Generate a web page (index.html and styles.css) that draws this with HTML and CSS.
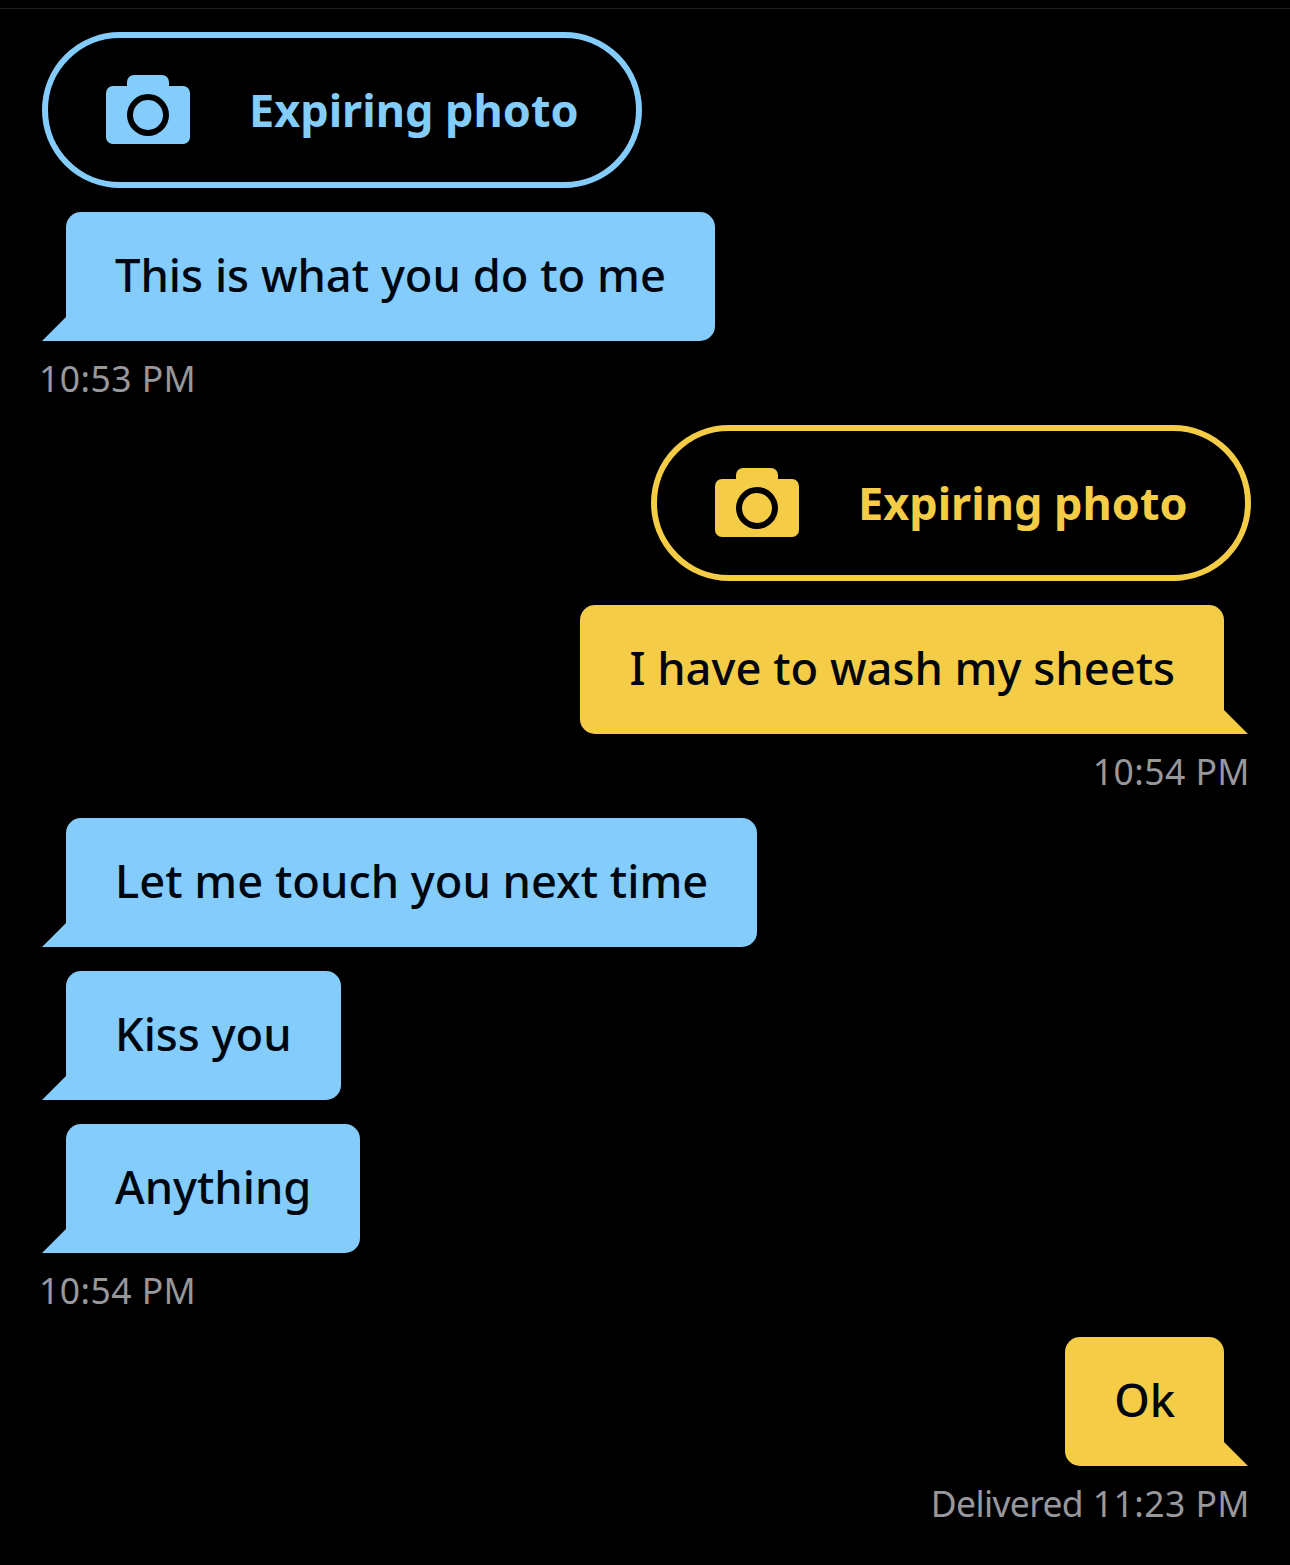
FILE: index.html
```html
<!DOCTYPE html>
<html lang="en">
<head>
  <meta charset="UTF-8">
  <meta name="viewport" content="width=device-width, initial-scale=1.0">
  <title>Chat</title>
  <link rel="stylesheet" href="styles.css">
</head>
<body>
  <div id="chat">
    <div class="group theirs first">
      <div class="photo">
        <svg class="camera" viewBox="0 0 84 69"><path fill-rule="evenodd" d="M21 11V7a7 7 0 0 1 7-7h28a7 7 0 0 1 7 7v4h14a7 7 0 0 1 7 7v44a7 7 0 0 1-7 7H7a7 7 0 0 1-7-7V18a7 7 0 0 1 7-7zM42 19a21 21 0 1 0 0 42a21 21 0 1 0 0-42zM42 25a15 15 0 1 1 0 30a15 15 0 1 1 0-30z"/></svg>
        <span>Expiring photo</span>
      </div>
      <div class="bubble">This is what you do to me</div>
      <div class="time">10:53 PM</div>
    </div>

    <div class="group mine">
      <div class="photo">
        <svg class="camera" viewBox="0 0 84 69"><path fill-rule="evenodd" d="M21 11V7a7 7 0 0 1 7-7h28a7 7 0 0 1 7 7v4h14a7 7 0 0 1 7 7v44a7 7 0 0 1-7 7H7a7 7 0 0 1-7-7V18a7 7 0 0 1 7-7zM42 19a21 21 0 1 0 0 42a21 21 0 1 0 0-42zM42 25a15 15 0 1 1 0 30a15 15 0 1 1 0-30z"/></svg>
        <span>Expiring photo</span>
      </div>
      <div class="bubble">I have to wash my sheets</div>
      <div class="time">10:54 PM</div>
    </div>

    <div class="group theirs">
      <div class="bubble">Let me touch you next time</div>
      <div class="bubble">Kiss you</div>
      <div class="bubble">Anything</div>
      <div class="time">10:54 PM</div>
    </div>

    <div class="group mine">
      <div class="bubble">Ok</div>
      <div class="time"><span class="status">Delivered</span> 11:23 PM</div>
    </div>
  </div>
</body>
</html>
```

FILE: styles.css
```css
body {
  margin: 0;
  background: #000;
  font-family: "Noto Sans", Arial, sans-serif;
}
#chat {
  border-top: 1px solid #222;
  margin-top: 8px;
  padding: 23px 40px 0 42px;
}
.group {
  display: flex;
  flex-direction: column;
  gap: 24px;
  margin-top: 28px;
}
.group.first {
  margin-top: 0;
}
.theirs {
  align-items: flex-start;
  --tone: #83ccfb;
}
.mine {
  align-items: flex-end;
  --tone: #f5cc45;
}
.photo {
  box-sizing: border-box;
  width: 600px;
  height: 156px;
  padding: 0 0 2px 58px;
  display: flex;
  align-items: center;
  gap: 59px;
  border: 6px solid var(--tone);
  border-radius: 78px;
  color: var(--tone);
  font-size: 45px;
  font-weight: 700;
}
.mine .photo {
  margin-right: -1px;
}
.camera {
  width: 84px;
  height: 69px;
  fill: var(--tone);
  flex: none;
}
.bubble {
  position: relative;
  box-sizing: border-box;
  height: 129px;
  padding: 0 49px 4px;
  display: flex;
  align-items: center;
  background: var(--tone);
  border-radius: 15px;
  color: #00060f;
  font-size: 45.3px;
  font-weight: 500;
  white-space: nowrap;
}
.theirs .bubble {
  margin-left: 24px;
  border-bottom-left-radius: 0;
}
.mine .bubble {
  margin-right: 26px;
  border-bottom-right-radius: 0;
}
/* little tail on the bottom corner */
.bubble::after {
  content: "";
  position: absolute;
  bottom: 0;
  width: 24px;
  height: 24px;
  background: var(--tone);
}
.theirs .bubble::after {
  left: -24px;
  clip-path: polygon(100% 0, 100% 100%, 0 100%);
}
.mine .bubble::after {
  right: -24px;
  clip-path: polygon(0 0, 100% 100%, 0 100%);
}
.time {
  margin-top: -4px;
  height: 36px;
  line-height: 35px;
  color: #97979c;
  font-size: 35.5px;
  letter-spacing: 0.45px;
}
.theirs .time {
  margin-left: -3px;
}
.status {
  letter-spacing: -0.65px;
}
```
